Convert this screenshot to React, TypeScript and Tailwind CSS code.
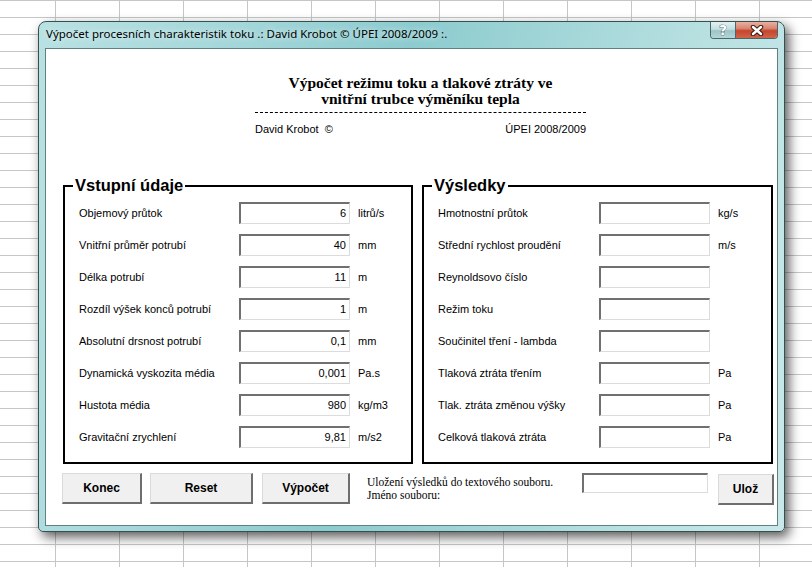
const inputs = [
  { label: "Objemový průtok", value: "6", unit: "litrů/s" },
  { label: "Vnitřní průměr potrubí", value: "40", unit: "mm" },
  { label: "Délka potrubí", value: "11", unit: "m" },
  { label: "Rozdíl výšek konců potrubí", value: "1", unit: "m" },
  { label: "Absolutní drsnost potrubí", value: "0,1", unit: "mm" },
  { label: "Dynamická vyskozita média", value: "0,001", unit: "Pa.s" },
  { label: "Hustota média", value: "980", unit: "kg/m3" },
  { label: "Gravitační zrychlení", value: "9,81", unit: "m/s2" },
]

const results = [
  { label: "Hmotnostní průtok", unit: "kg/s" },
  { label: "Střední rychlost proudění", unit: "m/s" },
  { label: "Reynoldsovo číslo", unit: "" },
  { label: "Režim toku", unit: "" },
  { label: "Součinitel tření - lambda", unit: "" },
  { label: "Tlaková ztráta třením", unit: "Pa" },
  { label: "Tlak. ztráta změnou výšky", unit: "Pa" },
  { label: "Celková tlaková ztráta", unit: "Pa" },
]

function Field({ value }: { value?: string }) {
  return (
    <div className="w-[111px] h-[22px] shrink-0 bg-white border-t-2 border-l-2 border-t-[#707070] border-l-[#707070] border-b border-r border-b-[#dcdcdc] border-r-[#dcdcdc] text-right pr-[3px] leading-[19px]">
      {value}
    </div>
  )
}

function Button({ label, w }: { label: string; w: string }) {
  return (
    <div className={`${w} h-[31px] shrink-0 bg-[#f0f0f0] border-t border-l border-t-[#dadada] border-l-[#dadada] border-r-2 border-b-2 border-r-[#6e6e6e] border-b-[#6e6e6e] flex items-center justify-center font-bold text-[12px]`}>
      {label}
    </div>
  )
}

export default function App() {
  return (
    <div className="w-[812px] h-[567px] overflow-hidden bg-white bg-[linear-gradient(to_right,#c6c6c6_1px,transparent_1px),linear-gradient(to_bottom,#c6c6c6_1px,transparent_1px)] [background-size:64px_17px] [background-position:55px_0px] pt-[21px] pl-[38px] font-['Liberation_Sans',sans-serif] text-black">
      {/* Dialog window */}
      <div className="w-[747px] h-[511px] rounded-t-[8px] rounded-b-[5px] border border-[#34504f] bg-[linear-gradient(100deg,#b9e1e3_0%,#a3d6d9_25%,#8ccbcf_45%,#9fd4d6_60%,#b8e0e1_80%,#c9e8e9_100%)] shadow-[4px_5px_12px_rgba(0,0,0,0.65)] flex flex-col px-[6px] pb-[5px]">
        {/* Title bar */}
        <div className="h-[26px] flex items-start justify-between shrink-0">
          <span className="pl-[1px] pt-[5px] text-[11.5px] leading-[14px] text-black font-['Noto_Sans',sans-serif] [text-shadow:0_0_6px_rgba(255,255,255,0.9)]">
            Výpočet procesních charakteristik toku .: David Krobot © ÚPEI 2008/2009 :.
          </span>
          <div className="flex h-[17px] rounded-b-[4px] border border-t-0 border-[#4a6769] overflow-hidden">
            <div className="w-[25px] h-full bg-[linear-gradient(to_bottom,#e2f1f2_0%,#c2dfe1_45%,#9cc4c7_55%,#b5d6d8_100%)] border-r border-[#4a6769] flex items-center justify-center text-[14px] font-bold text-white leading-none font-['DejaVu_Sans',sans-serif] [-webkit-text-stroke:0.6px_#22393c] [paint-order:stroke_fill]">
              ?
            </div>
            <div className="w-[41px] h-full bg-[linear-gradient(to_bottom,#eab0a2_0%,#d98670_40%,#c5452c_55%,#d0654b_100%)] flex items-center justify-center">
              <svg width="14" height="11" viewBox="0 0 14 11">
                <path d="M3 2 L11 9 M11 2 L3 9" stroke="#3a1a12" strokeWidth="4.5" strokeLinecap="round" />
                <path d="M3 2 L11 9 M11 2 L3 9" stroke="#ffffff" strokeWidth="2.5" strokeLinecap="round" />
              </svg>
            </div>
          </div>
        </div>

        {/* Client area */}
        <div className="flex-1 bg-white border border-[#5f8184] flex flex-col text-[11px]">
          {/* Header */}
          <div className="ml-[209px] w-[331px] pt-[26px] flex flex-col">
            <div className="font-['Liberation_Serif',serif] font-bold text-[15.5px] leading-[16px] text-center">
              <div>Výpočet režimu toku a tlakové ztráty ve</div>
              <div>vnitřní trubce výměníku tepla</div>
            </div>
            <div className="mt-[5px] border-t border-dashed border-black" />
            <div className="mt-[10px] flex justify-between leading-[13px]">
              <span>David Krobot&nbsp; ©</span>
              <span>ÚPEI 2008/2009</span>
            </div>
          </div>

          {/* Group boxes */}
          <div className="flex ml-[17px] mt-[40px] gap-[9px]">
            <fieldset className="w-[350px] m-0 border-2 border-black px-0 pt-[7px] pb-[14px] min-w-0">
              <legend className="ml-[8px] px-[2px] text-[16.5px] font-bold leading-[19px]">Vstupní údaje</legend>
              <div className="flex flex-col gap-[10px]">
                {inputs.map((r, i) => (
                  <div key={i} className="flex items-center h-[22px]">
                    <span className="pl-[14px] w-[174px] shrink-0">{r.label}</span>
                    <Field value={r.value} />
                    <span className="ml-[8px]">{r.unit}</span>
                  </div>
                ))}
              </div>
            </fieldset>
            <fieldset className="w-[351px] m-0 border-2 border-black px-0 pt-[7px] pb-[14px] min-w-0">
              <legend className="ml-[8px] px-[2px] text-[16.5px] font-bold leading-[19px]">Výsledky</legend>
              <div className="flex flex-col gap-[10px]">
                {results.map((r, i) => (
                  <div key={i} className="flex items-center h-[22px]">
                    <span className="pl-[14px] w-[175px] shrink-0">{r.label}</span>
                    <Field />
                    <span className="ml-[8px]">{r.unit}</span>
                  </div>
                ))}
              </div>
            </fieldset>
          </div>

          {/* Bottom controls */}
          <div className="flex items-start ml-[16px] mt-[9px]">
            <Button label="Konec" w="w-[80px]" />
            <div className="ml-[8px]"><Button label="Reset" w="w-[103px]" /></div>
            <div className="ml-[9px]"><Button label="Výpočet" w="w-[88px]" /></div>
            <div className="ml-[17px] w-[215px] pt-[3px] font-['Liberation_Serif',serif] text-[11.5px] leading-[13px]">
              <div>Uložení výsledků do textového souboru.</div>
              <div>Jméno souboru:</div>
            </div>
            <div className="w-[126px] h-[20px] shrink-0 bg-white border-t-2 border-l-2 border-t-[#707070] border-l-[#707070] border-b border-r border-b-[#dcdcdc] border-r-[#dcdcdc]" />
            <div className="ml-[10px] mt-[1px]"><Button label="Ulož" w="w-[56px]" /></div>
          </div>
        </div>
      </div>
    </div>
  )
}
